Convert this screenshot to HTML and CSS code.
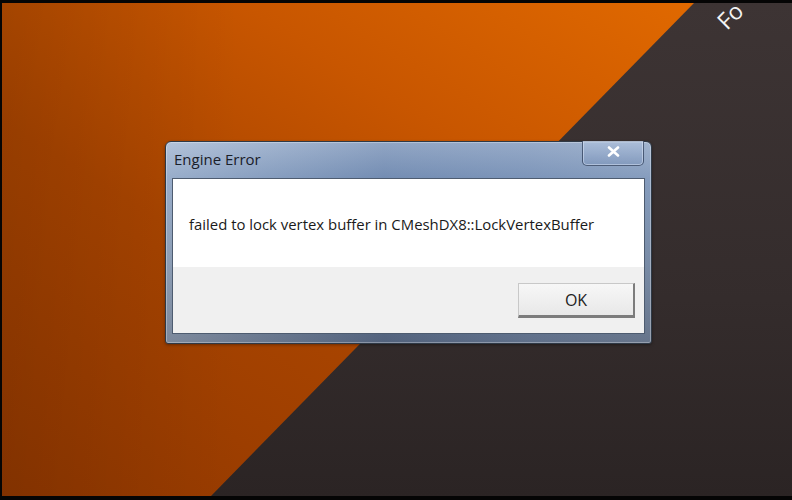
FILE: index.html
```html
<!DOCTYPE html>
<html lang="en">
<head>
    <meta charset="UTF-8">
    <title>Engine Error</title>
    <link rel="stylesheet" href="styles.css">
</head>
<body>
    <div class="screen">
        <div class="desktop">
            <div class="stripe"></div>
            <div class="brand">Fo</div>

            <div class="window">
                <div class="titlebar">
                    <span class="title">Engine Error</span>
                    <button class="close-btn">
                        <svg width="13" height="11" viewBox="0 0 13 11">
                            <path d="M2 1.5 L11 9.5 M11 1.5 L2 9.5" stroke="#ffffff" stroke-width="2.6" stroke-linecap="round"/>
                        </svg>
                    </button>
                </div>
                <div class="client">
                    <div class="message">
                        <p>failed to lock vertex buffer in CMeshDX8::LockVertexBuffer</p>
                    </div>
                    <div class="footer">
                        <button class="ok-btn">OK</button>
                    </div>
                </div>
            </div>
        </div>
    </div>
</body>
</html>
```

FILE: styles.css
```css
body {
    margin: 0;
    padding: 0;
    background-color: #050505;
    font-family: "Open Sans", "Noto Sans", sans-serif;
}

.screen {
    width: 792px;
    height: 500px;
    padding: 3px 0 4px 2px;
    box-sizing: border-box;
    background-color: #050505;
}

.desktop {
    position: relative;
    height: 100%;
    overflow: hidden;
    padding: 138px 0 0 163px;
    box-sizing: border-box;
    background: linear-gradient(to bottom, #3d3434 0%, #342c2c 60%, #2b2424 100%);
}

/* orange half of the wallpaper */
.stripe {
    position: absolute;
    top: 0;
    left: 0;
    right: 0;
    bottom: 0;
    background:
        linear-gradient(to right, rgba(0, 0, 0, 0.1) 0%, rgba(0, 0, 0, 0) 30%),
        linear-gradient(to bottom left, #e66d00 0%, #c85600 35%, #a84400 62%, #903700 100%);
    clip-path: polygon(0 0, 692px 0, 209px 100%, 0 100%);
}

.brand {
    position: absolute;
    top: 7px;
    left: 727px;
    color: #f4f4f4;
    font-size: 23px;
    transform: rotate(-45deg);
    transform-origin: left bottom;
    line-height: 1;
}

.window {
    position: relative;
    width: 487px;
    height: 203px;
    box-sizing: border-box;
    border: 1px solid #2f3946;
    border-radius: 6px 6px 3px 3px;
    padding: 0 6px 9px 6px;
    display: flex;
    flex-direction: column;
    background:
        linear-gradient(to right, rgba(200, 215, 235, 0.35) 0%, rgba(80, 110, 160, 0.25) 45%, rgba(120, 145, 185, 0.35) 75%, rgba(150, 170, 200, 0.3) 100%),
        linear-gradient(to bottom, #a7b8d0 0%, #7f97b9 18%, #6d7f98 60%, #535e70 100%);
    box-shadow: inset 0 0 0 1px rgba(255, 255, 255, 0.3), 0 1px 3px rgba(0, 0, 0, 0.35);
}

.titlebar {
    height: 36px;
    display: flex;
    align-items: center;
    padding-left: 2px;
    padding-bottom: 2px;
    box-sizing: border-box;
}

.title {
    font-size: 15px;
    color: #1a202a;
}

.close-btn {
    position: absolute;
    top: -1px;
    right: 7px;
    width: 62px;
    height: 25px;
    border: 1px solid rgba(40, 55, 80, 0.7);
    border-top: none;
    border-radius: 0 0 5px 5px;
    background: linear-gradient(to bottom, rgba(180, 198, 225, 0.6), rgba(120, 145, 185, 0.5));
    box-shadow: inset 0 0 0 1px rgba(230, 240, 255, 0.45);
    display: flex;
    align-items: center;
    justify-content: center;
    padding: 0 0 4px 0;
    cursor: pointer;
}

.client {
    flex: 1;
    display: flex;
    flex-direction: column;
    border: 1px solid #4e5c70;
    background: #f0f0f0;
}

.message {
    height: 88px;
    background: #ffffff;
    display: flex;
    align-items: center;
    padding-left: 16px;
}

.message p {
    margin: 2px 0 0 0;
    font-size: 14.9px;
    color: #1a1a1a;
}

.footer {
    flex: 1;
    display: flex;
    justify-content: flex-end;
    align-items: flex-start;
    padding: 16px 9px 0 0;
}

.ok-btn {
    width: 117px;
    height: 35px;
    border: 1px solid #c8c8c8;
    border-right: 2px solid #7c7c7c;
    border-bottom: 3px solid #7c7c7c;
    background: linear-gradient(to bottom, #f7f7f7, #e8e8e8);
    font-family: "Open Sans", "Noto Sans", sans-serif;
    font-size: 16px;
    color: #222;
    cursor: pointer;
}
```
